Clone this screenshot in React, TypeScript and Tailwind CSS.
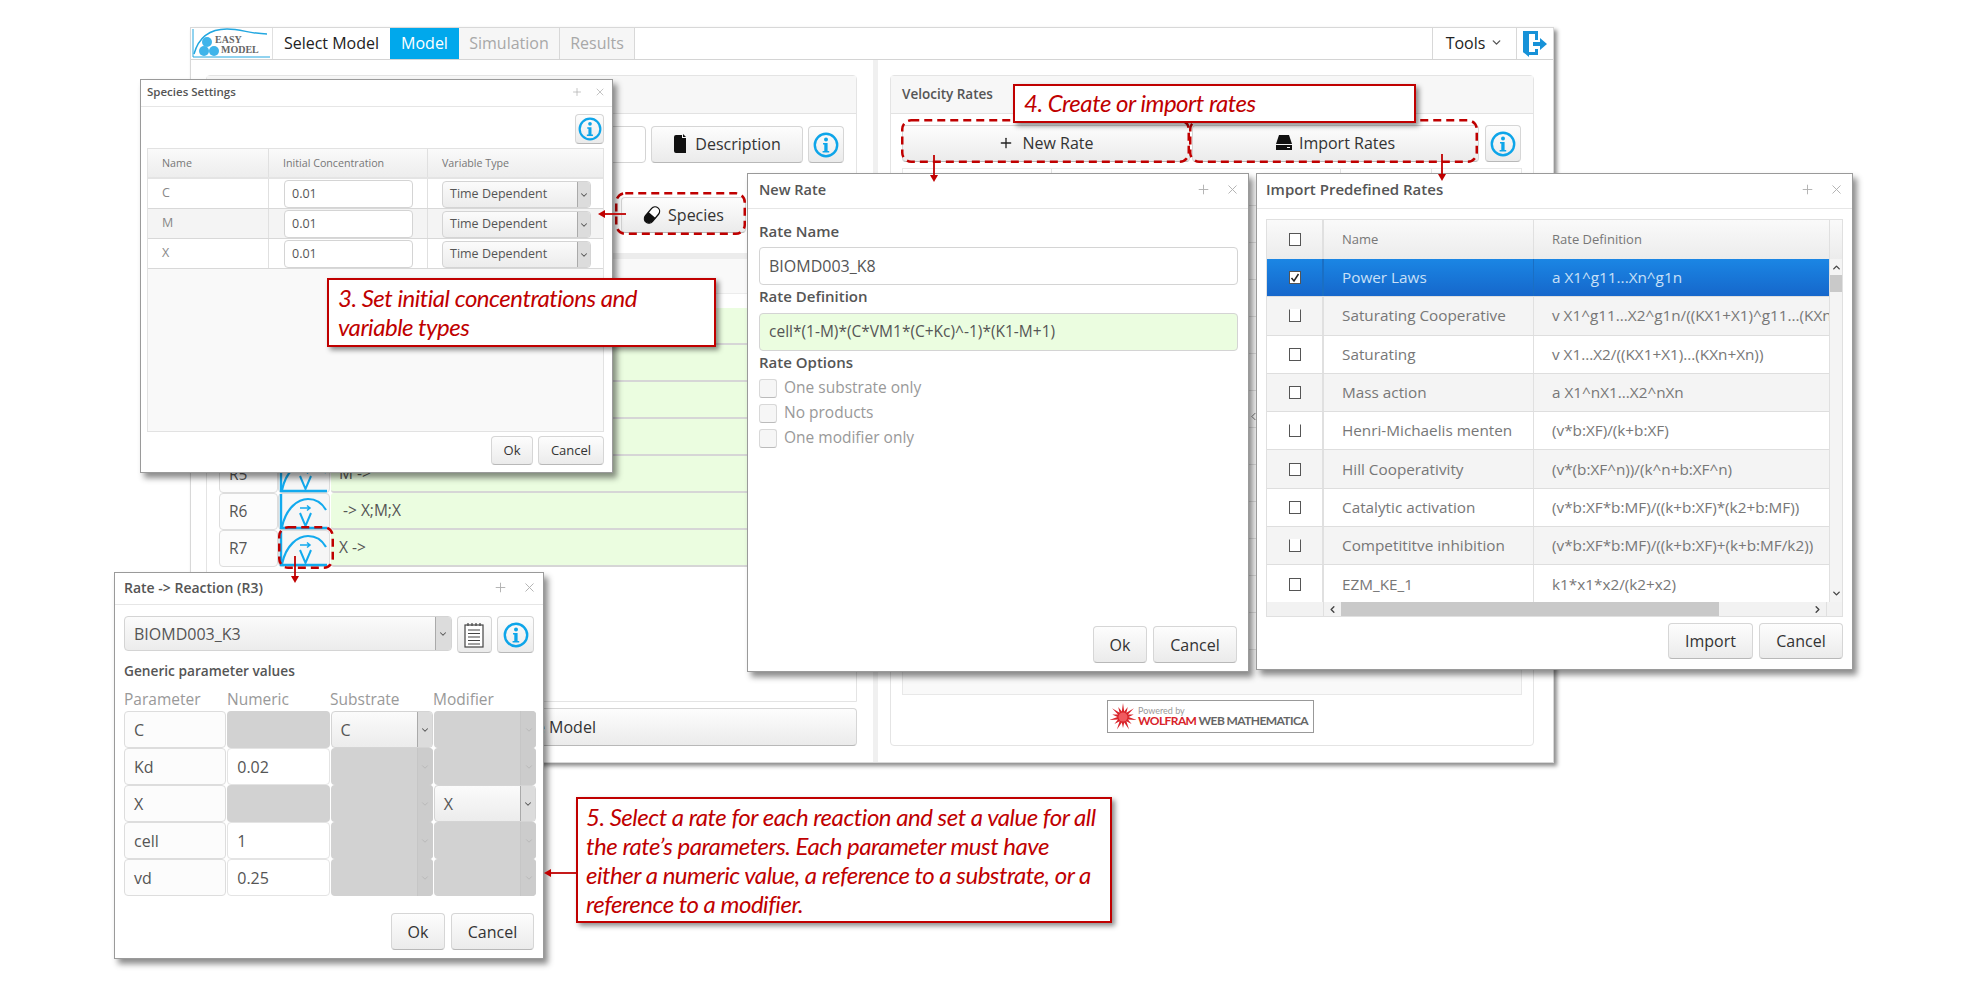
import React from 'react';
import clsx from 'clsx';
import { twMerge } from 'tailwind-merge';
import { ChevronDown, ChevronUp, ChevronLeft, ChevronRight, Plus, X } from 'lucide-react';

/* ─── Small drawings ─────────────────────────────────────────────────── */

const InfoIcon = ({ size = 26 }: { size?: number }) => (
  <svg width={size} height={size} viewBox="0 0 26 26" fill="none">
    <circle cx="13" cy="13" r="11.2" stroke="#0ea5e9" strokeWidth="2.4" />
    <circle cx="13" cy="7.4" r="2" fill="#0ea5e9" />
    <path d="M10 11h4.6v8h1.6v1.6H9.6V19h1.7v-6.4H10z" fill="#0ea5e9" />
  </svg>
);

const RateIcon = () => (
  <svg width="50" height="36" viewBox="0 0 50 36" fill="none">
    <path d="M2 0v34h46" stroke="#12aaee" strokeWidth="2.4" />
    <path d="M3 33C7 14 19 5 29 5c8 0 14 4 18 11" stroke="#12aaee" strokeWidth="2.2" />
    <path d="M21 19l5.500 13 5.500-13" stroke="#12aaee" strokeWidth="2" />
    <path d="M21 14h10M28 11.500l3 2.500-3 2.500" stroke="#12aaee" strokeWidth="1.500" />
  </svg>
);

const Logo = () => (
  <svg width="81" height="31" viewBox="0 0 81 31" fill="none">
    <path d="M2 1v28h77" stroke="#22a7e0" strokeWidth="1" />
    <path d="M3 26C8 8 20 1 36 1c14 0 24 5 40 5" stroke="#22a7e0" strokeWidth="1.500" />
    <circle cx="16" cy="14" r="5" fill="#3fb4ea" />
    <circle cx="13" cy="23" r="5" fill="#3fb4ea" />
    <circle cx="23" cy="23" r="5" fill="#3fb4ea" />
    <text x="24" y="15" fontFamily="Liberation Serif, serif" fontSize="10" fontWeight="700" fill="#666">EASY</text>
    <text x="30" y="25" fontFamily="Liberation Serif, serif" fontSize="10" fontWeight="700" fill="#666">MODEL</text>
  </svg>
);

const ExitIcon = () => (
  <svg width="26" height="30" viewBox="0 0 26 30">
    <path d="M1 2h15v9h-3V5H7l0 21-6-3z" fill="#1792d8" />
    <path d="M7 5l-6-3v21l6 5z" fill="#1792d8" />
    <path d="M7 26h9v-6h-3v3H7z" fill="#1792d8" />
    <path d="M11 13h7V9l7 6-7 6v-4h-7z" fill="#1792d8" />
  </svg>
);

const DocIcon = () => (
  <svg width="14" height="20" viewBox="0 0 14 20" fill="#111">
    <path d="M1 3a2 2 0 0 1 2-2h6v3h4v15H3a2 2 0 0 1-2-2z" />
    <path d="M10 0l3 3h-3z" />
  </svg>
);

const PillIcon = () => (
  <svg width="18" height="20" viewBox="0 0 18 20">
    <g transform="rotate(40 9 10)">
      <rect x="4.500" y="0.700" width="9" height="18.600" rx="4.500" fill="#fff" stroke="#111" strokeWidth="1.300" />
      <path d="M4.500 10h9v4.800a4.500 4.500 0 0 1-9 0z" fill="#111" />
    </g>
  </svg>
);

const DriveIcon = () => (
  <svg width="16" height="17" viewBox="0 0 16 17" fill="#111">
    <path d="M3 1h10l3 9H0z" />
    <path d="M0 11h16v5H0z" />
    <rect x="11" y="13" width="3" height="1" fill="#fff" />
  </svg>
);

const NotesIcon = () => (
  <svg width="20" height="26" viewBox="0 0 20 26" fill="none" stroke="#444" strokeWidth="1.200">
    <rect x="1" y="3" width="18" height="22" fill="#fff" />
    <path d="M4 1v3M8 1v3M12 1v3M16 1v3M4 8h12M4 11.500h12M4 15h12M4 18.500h12M4 22h12" />
  </svg>
);

// 14-point spiky star, alternating long and short rays
const starPoints = Array.from({ length: 28 }, (_, i) => {
  const a = (i * Math.PI) / 14;
  const r = i % 2 === 0 ? (i % 4 === 0 ? 14 : 11) : 5.5;
  return `${(13 + r * Math.sin(a)).toFixed(1)},${(14 - r * Math.cos(a)).toFixed(1)}`;
}).join(' ');

const WolframStar = () => (
  <svg width="26" height="28" viewBox="0 0 26 28" className="shrink-0">
    <polygon points={starPoints} fill="#d8232a" />
    <circle cx="13" cy="14" r="4.500" fill="#f05a5f" />
  </svg>
);

/* ─── Annotation overlays ────────────────────────────────────────────── */

const DashBox = ({ className, w, h }: { className: string; w: number; h: number }) => (
  <svg className={clsx('absolute', className)} width={w} height={h} fill="none">
    <rect x="1.250" y="1.250" width={w - 2.500} height={h - 2.500} rx="9" stroke="#c00000" strokeWidth="2.500" strokeDasharray="8 5" />
  </svg>
);

const DownArrow = ({ className, h }: { className: string; h: number }) => (
  <svg className={clsx('absolute', className)} width="10" height={h}>
    <path d={`M5 0V${h - 6}`} stroke="#c00000" strokeWidth="1.800" />
    <path d={`M1 ${h - 7}h8l-4 7z`} fill="#c00000" />
  </svg>
);

const LeftArrow = ({ className, w }: { className: string; w: number }) => (
  <svg className={clsx('absolute', className)} width={w} height="10">
    <path d={`M6 5H${w}`} stroke="#c00000" strokeWidth="1.800" />
    <path d="M7 1v8L0 5z" fill="#c00000" />
  </svg>
);

const Callout = ({ className, children }: { className: string; children: React.ReactNode }) => (
  <div className={clsx("absolute bg-white border-2 border-[#c00000] shadow-[3px_3px_5px_rgba(0,0,0,0.45)] font-['Lato',sans-serif] italic text-[#c00000] text-[24px] leading-[29px] tracking-[-0.02em] whitespace-nowrap", className)}>
    {children}
  </div>
);

/* ─── Widgets ────────────────────────────────────────────────────────── */

const Btn = ({ className, children }: { className?: string; children: React.ReactNode }) => (
  <div className={twMerge('flex items-center justify-center rounded-[4px] border border-[#d6d6d6] border-b-[#b8b8b8] bg-linear-to-b from-[#fdfdfd] to-[#ebebeb] text-[#333]', className)}>
    {children}
  </div>
);

const Field = ({ className, children }: { className?: string; children?: React.ReactNode }) => (
  <div className={twMerge('flex items-center rounded-[4px] border border-[#d4d4d4] bg-white text-[#555]', className)}>
    {children}
  </div>
);

const SelectBox = ({ className, arrow, children }: { className?: string; arrow: string; children: React.ReactNode }) => (
  <div className={clsx('flex items-stretch rounded-[4px] border border-[#d4d4d4] bg-linear-to-b from-[#fbfbfb] to-[#ececec] text-[#555]', className)}>
    <div className="flex flex-1 items-center min-w-0">{children}</div>
    <div className={clsx('flex items-center justify-center rounded-r-[3px] border-l border-[#aaa] bg-[#dcdcdc]', arrow)}>
      <ChevronDown size={10} strokeWidth={2.500} className="text-[#555]" />
    </div>
  </div>
);

const Window = ({ className, titleClass, title, iconGap, iconSize = 15, children }: { className: string; titleClass: string; title: string; iconGap: string; iconSize?: number; children: React.ReactNode }) => (
  <div className={clsx('absolute flex flex-col bg-white border border-[#9a9a9a] shadow-[4px_5px_6px_rgba(0,0,0,0.45)]', className)}>
    <div className={clsx('flex shrink-0 items-center justify-between border-b border-[#e6e6e6] pb-[3px] font-semibold text-[#555]', titleClass)}>
      <span>{title}</span>
      <span className={clsx('flex items-center text-[#b0b0b0]', iconGap)}>
        <Plus size={iconSize} strokeWidth={1.500} />
        <X size={iconSize} strokeWidth={1.500} />
      </span>
    </div>
    {children}
  </div>
);

const UncheckedBox = ({ clipped, checked }: { clipped?: boolean; checked?: boolean }) => (
  <div className={clsx('flex h-[13px] w-[12px] items-center justify-center border border-[#555] bg-white', clipped && 'border-t-transparent')}>
    {checked && (
      <svg width="10" height="10" viewBox="0 0 10 10" fill="none">
        <path d="M1.500 5l2.500 3L8.500 1" stroke="#222" strokeWidth="1.500" />
      </svg>
    )}
  </div>
);

/* ─── Main window ────────────────────────────────────────────────────── */

const reactions = [
  ['R1', 'C ->'],
  ['R2', '-> C'],
  ['R3', 'C -> X'],
  ['R4', 'X -> M'],
  ['R5', 'M ->'],
  ['R6', ' -> X;M;X'],
  ['R7', 'X ->'],
];

function LeftPanel() {
  return (
    <div className="flex w-[651px] flex-col">
      <div className="flex h-[627px] flex-col rounded-t-[4px] border border-[#e4e4e4]">
        <div className="h-[38px] shrink-0 border-b border-[#e2e2e2] bg-[#f7f7f7]" />
        <div className="flex h-[49px] shrink-0 items-end gap-[5px] px-[12px]">
          <Field className="h-[37px] flex-1" />
          <Btn className="h-[37px] w-[152px] gap-[8px] pb-[2px] text-[16px]">
            <DocIcon /> Description
          </Btn>
          <Btn className="h-[37px] w-[36px]"><InfoIcon /></Btn>
        </div>
        <div className="mt-[34px] flex h-[36px] shrink-0 justify-end pr-[110px]">
          <Btn className="h-[36px] w-[125px] gap-[7px] text-[16px]">
            <PillIcon /> Species
          </Btn>
        </div>
        <div className="mt-[20px] h-[41px] shrink-0 border-t-[6px] border-b border-[#ececec] bg-[#f9f9f9]" />
        <div className="flex flex-col px-[12px] pt-[14px]">
          {reactions.map(([id, text]) => (
            <div key={id} className="flex h-[37px] text-[15.500px] text-[#555]">
              <div className="flex w-[59px] items-center rounded-[4px] border border-[#ddd] bg-[#fcfcfc] pl-[9px]">{id}</div>
              <div className="flex w-[52px] items-center justify-center rounded-[4px] border border-[#ddd] bg-[#f6f6f6]"><RateIcon /></div>
              <div className="ml-[1px] flex flex-1 items-center rounded-[3px] border-b-2 border-[#d6d6d6] bg-[#ebfde0] pl-[8px] whitespace-pre">{text}</div>
            </div>
          ))}
        </div>
      </div>
      <Btn className="mt-[6px] h-[38px] pl-[18px] text-[16px]">Validate Model</Btn>
    </div>
  );
}

function RightPanel() {
  return (
    <div className="flex h-[671px] w-[644px] flex-col rounded-[4px] border border-[#e4e4e4]">
      <div className="flex h-[38px] shrink-0 items-center border-b border-[#e2e2e2] bg-[#f7f7f7] pl-[11px] text-[13.500px] font-semibold text-[#555]">
        Velocity Rates
      </div>
      <div className="flex shrink-0 gap-[2px] px-[11px] pt-[11px]">
        <Btn className="h-[37px] w-[288px] gap-[8px] pb-[2px] text-[16px]">
          <Plus size={16} strokeWidth={2} className="text-[#222]" /> New Rate
        </Btn>
        <Btn className="h-[37px] w-[287px] gap-[7px] pb-[2px] text-[16px]">
          <DriveIcon /> Import Rates
        </Btn>
        <Btn className="ml-[4px] h-[37px] w-[36px]"><InfoIcon /></Btn>
      </div>
      <div className="mx-[11px] mt-[6px] flex h-[527px] flex-col border border-[#e8e8e8] bg-[#f9f9f9]">
        {[0, 1, 2, 3, 4, 5, 6, 7, 8, 9, 10, 11, 12].map(i => (
          <div key={i} className="flex h-[37px] shrink-0 border-b border-[#e2e2e2] bg-white">
            <div className="w-[149px] border-r border-[#e2e2e2]" />
            <div className="w-[289px] border-r border-[#e2e2e2]" />
            <div className="w-[91px] border-r border-[#e2e2e2]" />
          </div>
        ))}
      </div>
      <div className="mt-[5px] flex justify-center">
        <div className="mr-[3px] flex h-[33px] w-[207px] items-center gap-[2px] border border-[#999] bg-white pl-[2px]">
          <WolframStar />
          <div className="flex flex-col font-['Lato',sans-serif] leading-none">
            <span className="text-[9px] text-[#999]">Powered by</span>
            <span className="text-[12px] font-bold tracking-[-0.05em] whitespace-nowrap text-[#666]">
              <span className="text-[#d8232a]">WOLFRAM</span> WEB MATHEMATICA
            </span>
          </div>
        </div>
      </div>
    </div>
  );
}

function MainWindow() {
  return (
    <div className="absolute left-[190px] top-[27px] flex h-[736px] w-[1364px] flex-col border border-[#d8d8d8] bg-white shadow-[3px_3px_4px_rgba(0,0,0,0.45)]">
      <div className="flex h-[32px] shrink-0 items-stretch border-b border-[#d4d4d4] text-[16px]">
        <div className="flex w-[82px] items-center border-r border-[#e0e0e0]"><Logo /></div>
        <div className="flex w-[117px] items-center justify-center pb-[2px] text-[#222]">Select Model</div>
        <div className="flex w-[69px] items-center justify-center bg-[#00a8ec] pb-[2px] text-white">Model</div>
        <div className="flex w-[101px] items-center justify-center border-r border-[#d8d8d8] bg-[#f6f6f6] pb-[2px] text-[#a8a8a8]">Simulation</div>
        <div className="flex w-[75px] items-center justify-center border-r border-[#d8d8d8] bg-[#f6f6f6] pb-[2px] text-[#a8a8a8]">Results</div>
        <div className="flex-1" />
        <div className="flex w-[85px] items-center justify-center gap-[5px] border-x border-[#d8d8d8] pb-[2px] text-[#222]">
          Tools <ChevronDown size={13} strokeWidth={2.500} className="text-[#555]" />
        </div>
        <div className="flex w-[36px] items-center justify-center"><ExitIcon /></div>
      </div>
      <div className="flex flex-1 pl-[15px] pt-[15px]">
        <LeftPanel />
        <div className="ml-[16px] -mt-[15px] w-[5px] bg-[#f0f0f0]" />
        <div className="ml-[12px]"><RightPanel /></div>
      </div>
    </div>
  );
}

/* ─── Dialogs ────────────────────────────────────────────────────────── */

function SpeciesWindow() {
  return (
    <Window className="left-[140px] top-[79px] h-[394px] w-[473px]" titleClass="h-[27px] px-[6px] text-[11.500px]" iconGap="gap-[11px]" iconSize={12} title="Species Settings">
      <div className="flex flex-1 flex-col pl-[6px] pr-[8px]">
        <div className="flex justify-end pt-[7px]">
          <Btn className="h-[30px] w-[29px]"><InfoIcon size={24} /></Btn>
        </div>
        <div className="mt-[4px] flex h-[284px] flex-col border border-[#e2e2e2] bg-[#f9f9f9] text-[10.700px] text-[#777]">
          <div className="flex h-[30px] shrink-0 border-b-2 border-[#e4e4e4] bg-linear-to-b from-[#fafafa] to-[#ededed]">
            <div className="flex w-[121px] items-center border-r border-[#e0e0e0] pl-[14px]">Name</div>
            <div className="flex w-[159px] items-center border-r border-[#e0e0e0] pl-[14px]">Initial Concentration</div>
            <div className="flex flex-1 items-center pl-[14px]">Variable Type</div>
          </div>
          {['C', 'M', 'X'].map((n, i) => (
            <div key={n} className={clsx('flex h-[30px] shrink-0 border-b border-[#d8d8d8] text-[12.500px]', i === 1 ? 'bg-[#f4f4f4]' : 'bg-white')}>
              <div className="flex w-[121px] items-center border-r border-[#e0e0e0] pl-[14px] text-[#888]">{n}</div>
              <div className="flex w-[159px] items-end border-r border-[#e0e0e0] pl-[15px]">
                <Field className="h-[28px] w-[129px] pl-[7px]">0.01</Field>
              </div>
              <div className="flex flex-1 items-end pl-[14px]">
                <SelectBox className="h-[27px] w-[149px] pl-[7px]" arrow="w-[13px]">Time Dependent</SelectBox>
              </div>
            </div>
          ))}
        </div>
        <div className="mt-[4px] flex justify-end gap-[5px] text-[13px]">
          <Btn className="h-[29px] w-[42px] text-[13px]">Ok</Btn>
          <Btn className="h-[29px] w-[66px] text-[13px]">Cancel</Btn>
        </div>
      </div>
    </Window>
  );
}

function NewRateWindow() {
  return (
    <Window className="left-[747px] top-[173px] h-[499px] w-[502px]" titleClass="h-[35px] pl-[11px] pr-[8px] text-[14.500px]" iconGap="gap-[14px]" title="New Rate">
      <div className="flex flex-1 flex-col px-[11px]">
        <div className="mt-[12px] text-[15px] font-semibold leading-[20px] text-[#555]">Rate Name</div>
        <Field className="mt-[6px] h-[38px] w-[479px] pl-[9px] text-[16px]">BIOMD003_K8</Field>
        <div className="mt-[1px] text-[15px] font-semibold leading-[20px] text-[#555]">Rate Definition</div>
        <Field className="mt-[7px] h-[38px] w-[479px] bg-[#ebfde0] pl-[9px] text-[15.500px]">cell*(1-M)*(C*VM1*(C+Kc)^-1)*(K1-M+1)</Field>
        <div className="mt-[1px] text-[15px] font-semibold leading-[20px] text-[#555]">Rate Options</div>
        <div className="mt-[7px] flex flex-col gap-[7px] text-[15.500px] text-[#999]">
          {['One substrate only', 'No products', 'One modifier only'].map(o => (
            <div key={o} className="flex h-[18px] items-center gap-[7px]">
              <div className="h-[19px] w-[18px] rounded-[3px] border border-[#d8d8d8] border-b-[#bbb] bg-[#f6f6f6]" />
              {o}
            </div>
          ))}
        </div>
        <div className="flex-1" />
        <div className="mb-[8px] flex justify-end gap-[6px]">
          <Btn className="h-[37px] w-[54px] text-[16px]">Ok</Btn>
          <Btn className="h-[37px] w-[84px] text-[16px]">Cancel</Btn>
        </div>
      </div>
    </Window>
  );
}

const rates = [
  ['Power Laws', 'a X1^g11...Xn^g1n'],
  ['Saturating Cooperative', 'v X1^g11...X2^g1n/((KX1+X1)^g11...(KXn+Xn)^g1n)'],
  ['Saturating', 'v X1...X2/((KX1+X1)...(KXn+Xn))'],
  ['Mass action', 'a X1^nX1...X2^nXn'],
  ['Henri-Michaelis menten', '(v*b:XF)/(k+b:XF)'],
  ['Hill Cooperativity', '(v*(b:XF^n))/(k^n+b:XF^n)'],
  ['Catalytic activation', '(v*b:XF*b:MF)/((k+b:XF)*(k2+b:MF))'],
  ['Competititve inhibition', '(v*b:XF*b:MF)/((k+b:XF)+(k+b:MF/k2))'],
  ['EZM_KE_1', 'k1*x1*x2/(k2+x2)'],
];

function ImportWindow() {
  return (
    <Window className="left-[1256px] top-[173px] h-[497px] w-[597px]" titleClass="h-[35px] pl-[9px] pr-[8px] text-[15px]" iconGap="gap-[14px]" title="Import Predefined Rates">
      <div className="flex flex-1 flex-col pl-[9px] pr-[9px]">
        <div className="mt-[10px] flex h-[398px] flex-col border border-[#e0e0e0] text-[15.300px]">
          <div className="flex h-[39px] shrink-0 bg-linear-to-b from-[#fafafa] to-[#ececec] text-[13px] text-[#777]">
            <div className="flex w-[57px] items-center justify-center border-r-2 border-[#e0e0e0]"><UncheckedBox /></div>
            <div className="flex w-[210px] items-center border-r border-[#e0e0e0] pl-[18px]">Name</div>
            <div className="flex w-[295px] items-center pl-[18px]">Rate Definition</div>
            <div className="flex-1 border-l border-[#e0e0e0]" />
          </div>
          <div className="flex h-[343px] shrink-0">
            <div className="flex w-[562px] flex-col overflow-hidden">
              {rates.map(([name, def], i) => (
                <div
                  key={name}
                  className={clsx(
                    'flex h-[38.300px] shrink-0 border-b border-[#dedede]',
                    i === 0 ? 'bg-linear-to-b from-[#1b86e4] to-[#1667cb] text-[#c9e0f7]' : i % 2 === 1 ? 'bg-[#f4f4f4] text-[#777]' : 'bg-white text-[#777]',
                  )}
                >
                  <div className={clsx('flex w-[57px] shrink-0 items-center justify-center border-r-2', i === 0 ? 'border-[#1a6fc4]' : 'border-[#e0e0e0]')}>
                    <UncheckedBox checked={i === 0} clipped={i === 1 || i === 4 || i === 7} />
                  </div>
                  <div className={clsx('flex w-[210px] shrink-0 items-center border-r pl-[18px]', i === 0 ? 'border-[#1a6fc4]' : 'border-[#e0e0e0]')}>{name}</div>
                  <div className="flex min-w-0 flex-1 items-center overflow-hidden pl-[18px] whitespace-nowrap">{def}</div>
                </div>
              ))}
            </div>
            <div className="flex flex-1 flex-col items-center border-l border-[#e0e0e0] bg-[#f4f4f4]">
              <ChevronUp size={11} strokeWidth={3} className="mt-[3px] text-[#444]" />
              <div className="mt-[2px] h-[17px] w-full bg-[#c9c9c9]" />
              <div className="flex-1" />
              <ChevronDown size={11} strokeWidth={3} className="mb-[3px] text-[#444]" />
            </div>
          </div>
          <div className="flex flex-1 bg-[#f2f2f2]">
            <div className="w-[57px] border-r border-[#e0e0e0]" />
            <div className="flex flex-1 items-center">
              <ChevronLeft size={11} strokeWidth={3} className="mx-[3px] text-[#444]" />
              <div className="h-full w-[378px] bg-[#c9c9c9]" />
              <div className="flex-1" />
              <ChevronRight size={11} strokeWidth={3} className="mx-[3px] text-[#444]" />
            </div>
            <div className="w-[16px] border-l border-[#e0e0e0]" />
          </div>
        </div>
        <div className="mt-[6px] flex justify-end gap-[6px]">
          <Btn className="h-[36px] w-[85px] text-[16px]">Import</Btn>
          <Btn className="h-[36px] w-[84px] text-[16px]">Cancel</Btn>
        </div>
      </div>
    </Window>
  );
}

const params = [
  { name: 'C', num: null, sub: 'C', mod: null },
  { name: 'Kd', num: '0.02', sub: null, mod: null },
  { name: 'X', num: null, sub: null, mod: 'X' },
  { name: 'cell', num: '1', sub: null, mod: null },
  { name: 'vd', num: '0.25', sub: null, mod: null },
];

const ParamSelect = ({ value }: { value: string | null }) =>
  value ? (
    <SelectBox className="h-full pl-[9px] text-[16px]" arrow="w-[15px]">{value}</SelectBox>
  ) : (
    <div className="flex h-full justify-end rounded-[4px] bg-[#d2d2d2]">
      <div className="flex w-[16px] items-center justify-center rounded-r-[4px] border-l border-[#c6c6c6] bg-[#cccccc]">
        <ChevronDown size={10} strokeWidth={2} className="text-[#b4b4b4]" />
      </div>
    </div>
  );

function RateWindow() {
  return (
    <Window className="left-[114px] top-[572px] h-[387px] w-[430px]" titleClass="h-[32px] pl-[9px] pr-[6px] text-[14px]" iconGap="gap-[14px]" title="Rate -> Reaction (R3)">
      <div className="flex flex-1 flex-col px-[9px]">
        <div className="mt-[11px] flex gap-[5px]">
          <SelectBox className="h-[35px] w-[330px] pl-[9px] text-[16px]" arrow="w-[16px]">BIOMD003_K3</SelectBox>
          <Btn className="h-[37px] w-[36px]"><NotesIcon /></Btn>
          <Btn className="h-[37px] w-[37px]"><InfoIcon /></Btn>
        </div>
        <div className="mt-[8px] text-[13.700px] font-semibold leading-[20px] text-[#555]">Generic parameter values</div>
        <div className="mt-[8px] grid h-[20px] w-[412px] grid-cols-4 text-[15.500px] leading-[20px] text-[#999]">
          <span>Parameter</span>
          <span>Numeric</span>
          <span>Substrate</span>
          <span>Modifier</span>
        </div>
        <div className="mt-[2px] grid w-[412px] grid-cols-4 gap-x-[1px] text-[16px] text-[#555]">
          {params.map(p => (
            <React.Fragment key={p.name}>
              <div className="flex h-[37px] items-center rounded-[4px] border border-[#ddd] bg-[#fcfcfc] pl-[9px]">{p.name}</div>
              {p.num ? (
                <div className="flex h-[37px] items-center rounded-[4px] border border-[#e4e4e4] bg-white pl-[9px]">{p.num}</div>
              ) : (
                <div className="h-[37px] rounded-[4px] bg-[#d2d2d2]" />
              )}
              <div className="h-[37px]"><ParamSelect value={p.sub} /></div>
              <div className="h-[37px]"><ParamSelect value={p.mod} /></div>
            </React.Fragment>
          ))}
        </div>
        <div className="mt-[17px] flex w-[410px] justify-end gap-[6px]">
          <Btn className="h-[37px] w-[54px] text-[16px]">Ok</Btn>
          <Btn className="h-[37px] w-[83px] text-[16px]">Cancel</Btn>
        </div>
      </div>
    </Window>
  );
}

export default function App() {
  return (
    <div className="relative h-[983px] w-[1965px] overflow-hidden bg-white font-['Open_Sans',sans-serif]">
      <MainWindow />
      <ChevronLeft size={13} strokeWidth={1.500} className="absolute left-[1247px] top-[410px] text-[#555]" />
      <DashBox className="left-[901px] top-[119px]" w={289} h={44} />
      <DashBox className="left-[1189px] top-[119px]" w={289} h={44} />
      <DashBox className="left-[615px] top-[192px]" w={131} h={43} />
      <DashBox className="left-[278px] top-[526px]" w={56} h={43} />
      <SpeciesWindow />
      <NewRateWindow />
      <ImportWindow />
      <RateWindow />
      <Callout className="left-[327px] top-[278px] h-[69px] w-[389px] pl-[9px] pt-[3px]">
        3. Set initial concentrations and<br />variable types
      </Callout>
      <Callout className="left-[1013px] top-[84px] h-[39px] w-[403px] pl-[9px] pt-[2px]">
        4. Create or import rates
      </Callout>
      <Callout className="left-[576px] top-[797px] h-[126px] w-[536px] pl-[8px] pt-[3px]">
        5. Select a rate for each reaction and set a value for all<br />
        the rate’s parameters. Each parameter must have<br />
        either a numeric value, a reference to a substrate, or a<br />
        reference to a modifier.
      </Callout>
      <LeftArrow className="left-[598px] top-[209px]" w={28} />
      <LeftArrow className="left-[544px] top-[868px]" w={32} />
      <DownArrow className="left-[929px] top-[155px]" h={27} />
      <DownArrow className="left-[1437px] top-[154px]" h={27} />
      <DownArrow className="left-[290px] top-[556px]" h={27} />
    </div>
  );
}
